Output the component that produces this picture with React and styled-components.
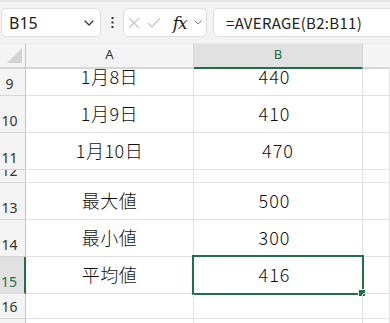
import React from 'react';
import styled, { createGlobalStyle } from 'styled-components';

const GREEN = '#1e7145';
const GRID = '#e1e1e1';

const Global = createGlobalStyle`
  html, body { margin: 0; padding: 0; background: #fff; overflow: hidden; }
  body { width: 390px; height: 323px; font-family: "Noto Sans CJK JP", "Noto Sans", sans-serif; }
`

const Page = styled.div`
  width: 390px;
  height: 323px;
  display: flex;
  flex-direction: column;
  overflow: hidden;
`

const Toolbar = styled.div`
  height: 44px;
  box-sizing: border-box;
  background: #f3f3f3;
  border-top: 2px solid #e7e7e7;
  border-bottom: 1px solid #e9e9e9;
  display: flex;
  align-items: flex-start;
  padding: 6px 0 0 1px;
  flex-shrink: 0;
`

const Box = styled.div`
  height: 29px;
  box-sizing: border-box;
  background: #fff;
  border: 1px solid #dedede;
  border-radius: 5px;
  display: flex;
  align-items: center;
`

const NameBox = styled(Box)`
  width: 100px;
  padding: 0 6px 0 7px;
  justify-content: space-between;
  font-family: "Noto Sans", "Liberation Sans", sans-serif;
  font-size: 16px;
  color: #222;
`

const Dots = styled.div`
  width: 22px;
  height: 29px;
  display: flex;
  align-items: center;
  justify-content: center;
`

const FxBox = styled(Box)`
  width: 84px;
  padding: 0 4px;
  justify-content: space-between;
`

const FxText = styled.span`
  font-family: "DejaVu Serif", "Liberation Serif", serif;
  font-style: italic;
  font-size: 17px;
  color: #222;
  letter-spacing: -1px;
  margin-left: 4px;
`

const FormulaBox = styled(Box)`
  flex: 1;
  margin-left: 6px;
  margin-right: -4px;
  padding-left: 12px;
  font-family: "Noto Sans CJK JP", sans-serif;
  font-size: 15px;
  color: #222;
  letter-spacing: 0.3px;
`

const Grid = styled.div`
  display: grid;
  grid-template-columns: 26px 168px 169px 1fr;
`

const Corner = styled.div`
  height: 25px;
  box-sizing: border-box;
  background: #f4f4f4;
  border-right: 1px solid #c6c6c6;
  border-bottom: 2px solid #d6d6d6;
  display: flex;
  align-items: flex-end;
  justify-content: flex-end;
  padding: 0 3px 4px 0;
`

const ColHead = styled.div`
  height: 25px;
  box-sizing: border-box;
  background: ${p => (p.$active ? '#e1e1e1' : '#f4f4f4')};
  color: ${p => (p.$active ? GREEN : '#333')};
  border-right: 1px solid ${p => (p.$edge ? 'transparent' : '#d6d6d6')};
  border-bottom: 2px solid ${p => (p.$active ? GREEN : '#d6d6d6')};
  font-family: "Noto Sans", sans-serif;
  font-size: 13px;
  display: flex;
  align-items: center;
  justify-content: center;
  padding-bottom: 4px;
`

const Viewport = styled.div`
  flex: 1;
  overflow: hidden;
`

const Rows = styled.div`
  margin-top: -10px;
  display: grid;
  grid-template-columns: 26px 168px 169px 1fr;
`

const RowHead = styled.div`
  height: ${p => p.$h}px;
  box-sizing: border-box;
  overflow: hidden;
  background: ${p => (p.$active ? '#e1e1e1' : '#f4f4f4')};
  color: ${p => (p.$active ? GREEN : '#333')};
  border-right: ${p => (p.$active ? `2px solid ${GREEN}` : '1px solid #c6c6c6')};
  border-bottom: 1px solid #d6d6d6;
  font-family: "Noto Sans", sans-serif;
  font-size: 14px;
  display: flex;
  align-items: flex-end;
  justify-content: center;
  padding: 0 6px 4px 0;
  line-height: 1;
`

const Cell = styled.div`
  position: relative;
  height: ${p => p.$h}px;
  box-sizing: border-box;
  border-right: 1px solid ${GRID};
  border-bottom: 1px solid ${GRID};
  font-family: "Noto Sans CJK JP", sans-serif;
  font-weight: 300;
  font-size: 18px;
  color: #111;
  display: flex;
  align-items: center;
  justify-content: center;
  padding: 0 ${p => p.$nudge || 0}px 2px 0;
  letter-spacing: ${p => (p.$num ? '1px' : '0.5px')};
`

const Selection = styled.div`
  position: absolute;
  left: -2px;
  top: -2px;
  right: -2px;
  bottom: -2px;
  border: 2px solid ${GREEN};
  pointer-events: none;
`

const Handle = styled.div`
  position: absolute;
  right: -4px;
  bottom: -4px;
  width: 6px;
  height: 6px;
  background: ${GREEN};
  border: 1px solid #fff;
`

const rows = [
  { n: 9, h: 37, a: '1月8日', b: '440', nudge: 7 },
  { n: 10, h: 37, a: '1月9日', b: '410', nudge: 7 },
  { n: 11, h: 37, a: '1月10日', b: '470', nudge: 0 },
  { n: 12, h: 13, a: '', b: '' },
  { n: 13, h: 37, a: '最大値', b: '500', nudge: 7 },
  { n: 14, h: 37, a: '最小値', b: '300', nudge: 7 },
  { n: 15, h: 37, a: '平均値', b: '416', nudge: 7, active: true },
  { n: 16, h: 25, a: '', b: '' },
  { n: 17, h: 25, a: '', b: '' },
];

const Chevron = ({ size = 10, color = '#333' }) => (
  <svg width={size} height={size * 0.6} viewBox="0 0 10 6" fill="none">
    <path d="M1 1l4 4 4-4" stroke={color} strokeWidth="1.2" strokeLinecap="round" strokeLinejoin="round" />
  </svg>
);

export default function App() {
  return (
    <Page>
      <Global />
      <Toolbar>
        <NameBox>
          <span>B15</span>
          <Chevron />
        </NameBox>
        <Dots>
          <svg width="3" height="11" viewBox="0 0 3 11">
            <rect x="0.5" y="0" width="2" height="2" fill="#333" />
            <rect x="0.5" y="4.5" width="2" height="2" fill="#333" />
            <rect x="0.5" y="9" width="2" height="2" fill="#333" />
          </svg>
        </Dots>
        <FxBox>
          <svg width="12" height="12" viewBox="0 0 12 12">
            <path d="M1 1l10 10M11 1L1 11" stroke="#c4c4c4" strokeWidth="1.2" />
          </svg>
          <svg width="14" height="11" viewBox="0 0 14 11">
            <path d="M1 6l4 4 8-9" stroke="#c4c4c4" strokeWidth="1.2" fill="none" />
          </svg>
          <FxText>fx</FxText>
          <Chevron size={8} color="#777" />
        </FxBox>
        <FormulaBox>=AVERAGE(B2:B11)</FormulaBox>
      </Toolbar>
      <Grid>
        <Corner>
          <svg width="15" height="15" viewBox="0 0 15 15">
            <path d="M15 0V15H0Z" fill="#d3d3d3" />
          </svg>
        </Corner>
        <ColHead>A</ColHead>
        <ColHead $active>B</ColHead>
        <ColHead $edge />
      </Grid>
      <Viewport>
        <Rows>
          {rows.map(r => (
            <React.Fragment key={r.n}>
              <RowHead $h={r.h} $active={r.active}>{r.n}</RowHead>
              <Cell $h={r.h}>{r.a}</Cell>
              <Cell $h={r.h} $num $nudge={r.nudge}>
                {r.b}
                {r.active && (
                  <Selection>
                    <Handle />
                  </Selection>
                )}
              </Cell>
              <Cell $h={r.h} />
            </React.Fragment>
          ))}
        </Rows>
      </Viewport>
    </Page>
  );
}
